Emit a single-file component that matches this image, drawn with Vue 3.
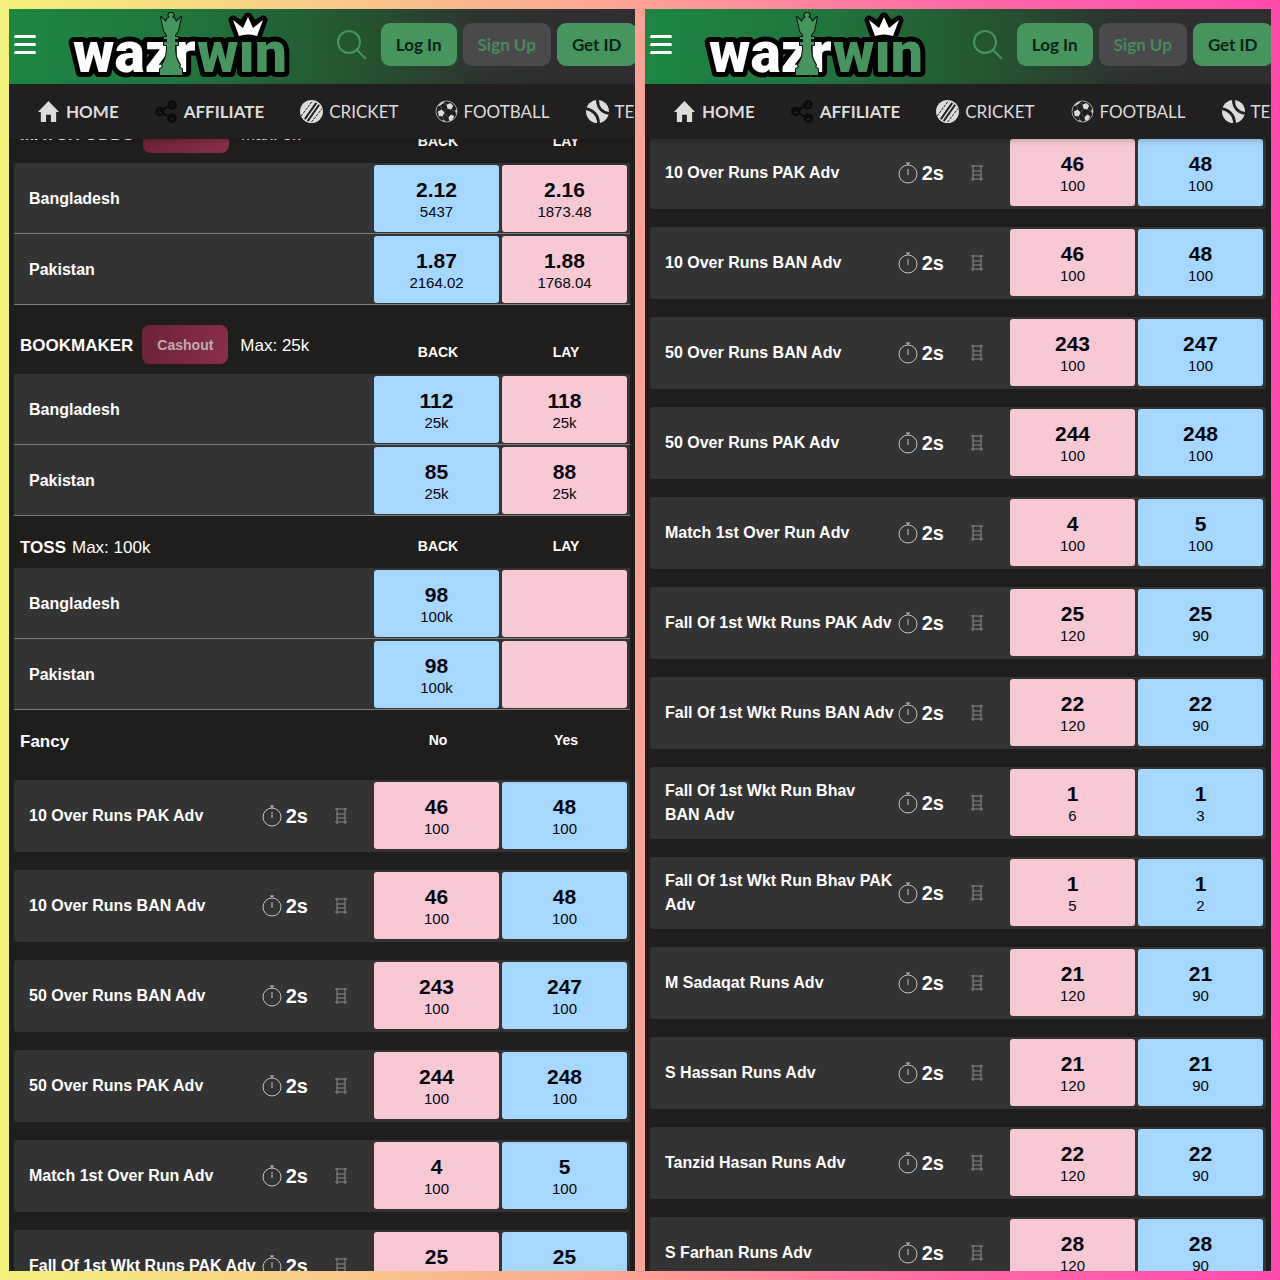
<script setup>
import { ref, onMounted } from 'vue';

const fancy = [
  { name: '10 Over Runs PAK Adv', odds: [['46', '100'], ['48', '100']] },
  { name: '10 Over Runs BAN Adv', odds: [['46', '100'], ['48', '100']] },
  { name: '50 Over Runs BAN Adv', odds: [['243', '100'], ['247', '100']] },
  { name: '50 Over Runs PAK Adv', odds: [['244', '100'], ['248', '100']] },
  { name: 'Match 1st Over Run Adv', odds: [['4', '100'], ['5', '100']] },
  { name: 'Fall Of 1st Wkt Runs PAK Adv', odds: [['25', '120'], ['25', '90']] },
  { name: 'Fall Of 1st Wkt Runs BAN Adv', odds: [['22', '120'], ['22', '90']] },
  { name: 'Fall Of 1st Wkt Run Bhav BAN\u00a0Adv', odds: [['1', '6'], ['1', '3']] },
  { name: 'Fall Of 1st Wkt Run Bhav PAK Adv', odds: [['1', '5'], ['1', '2']] },
  { name: 'M Sadaqat Runs Adv', odds: [['21', '120'], ['21', '90']] },
  { name: 'S Hassan Runs Adv', odds: [['21', '120'], ['21', '90']] },
  { name: 'Tanzid Hasan Runs Adv', odds: [['22', '120'], ['22', '90']] },
  { name: 'S Farhan Runs Adv', odds: [['28', '120'], ['28', '90']] },
];

const fancyMarket = { title: 'Fancy', type: 'fancy', labels: ['No', 'Yes'], rows: fancy };

const markets = [
  {
    title: 'MATCH ODDS', type: 'odds', cashout: true, max: 'Max: 5k', labels: ['BACK', 'LAY'],
    rows: [
      { name: 'Bangladesh', odds: [['2.12', '5437'], ['2.16', '1873.48']] },
      { name: 'Pakistan', odds: [['1.87', '2164.02'], ['1.88', '1768.04']] },
    ],
  },
  {
    title: 'BOOKMAKER', type: 'odds', cashout: true, max: 'Max: 25k', labels: ['BACK', 'LAY'],
    rows: [
      { name: 'Bangladesh', odds: [['112', '25k'], ['118', '25k']] },
      { name: 'Pakistan', odds: [['85', '25k'], ['88', '25k']] },
    ],
  },
  {
    title: 'TOSS', type: 'odds', max: 'Max: 100k', labels: ['BACK', 'LAY'],
    rows: [
      { name: 'Bangladesh', odds: [['98', '100k'], ['', '']] },
      { name: 'Pakistan', odds: [['98', '100k'], ['', '']] },
    ],
  },
  fancyMarket,
];

const screens = [
  { id: 'main', markets, scroll: 45 },
  { id: 'fancy', markets: [fancyMarket], scroll: 72 },
];

const navItems = [
  { label: 'HOME', icon: 'home', bold: true },
  { label: 'AFFILIATE', icon: 'share', bold: true },
  { label: 'CRICKET', icon: 'cricket' },
  { label: 'FOOTBALL', icon: 'football' },
  { label: 'TENNIS', icon: 'tennis' },
];

const lists = ref([]);

onMounted(() => {
  lists.value.forEach((el, i) => {
    el.scrollTop = screens[i].scroll;
  });
});
</script>

<template>
  <div class="stage">
    <section v-for="screen in screens" :key="screen.id" class="screen">
      <header class="topbar">
        <button class="menu-btn" aria-label="Menu">
          <span></span><span></span><span></span>
        </button>

        <svg class="logo" viewBox="0 0 222 68" role="img" aria-label="wazirwin">
          <g class="logo-text logo-outline">
            <text x="3" y="61">waz</text>
            <text x="104" y="61">r</text>
            <text x="127" y="61">wın</text>
          </g>
          <path class="crown-outline" d="M169 26 L163 9 L172 15 L178 6 L184 15 L193 9 L187 26 Z" />
          <g class="logo-text">
            <text class="white" x="3" y="61">waz</text>
            <text class="white" x="104" y="61">r</text>
            <text class="green" x="127" y="61">wın</text>
          </g>
          <path class="crown" d="M169 25 L163 9 L173 17 L178 6 L183 17 L193 9 L187 25 Q178 22 169 25 Z" />
          <path
            class="queen"
            d="M101 2 A2 2 0 0 1 102 6 L105 8 L106 11 L111 6 L108 20 L105 24 V26 H108 V28 H105 V31 H108 V34 H105 C105 46 107 49 110 54 L109 56 L112 58 V64 H90 V58 L93 56 L92 54 C95 49 97 46 97 34 H94 V31 H97 V28 H94 V26 H97 V24 L94 20 L91 6 L96 11 L97 8 L100 6 A2 2 0 0 1 101 2 Z"
          />
        </svg>

        <button class="search-btn" aria-label="Search">
          <svg width="32" height="32" viewBox="0 0 32 32">
            <circle cx="13" cy="13" r="11" />
            <path d="M21 21 L30 30" />
          </svg>
        </button>

        <div class="actions">
          <button class="btn">Log In</button>
          <button class="btn muted">Sign Up</button>
          <button class="btn">Get ID</button>
        </div>
      </header>

      <nav class="nav">
        <a v-for="item in navItems" :key="item.label" href="#" :class="['nav-link', { bold: item.bold }]">
          <svg v-if="item.icon === 'home'" class="icon" viewBox="0 0 24 24">
            <path d="M12 1 L23 12.500 H20 V23 H14.500 V15.500 H9.500 V23 H4 V12.500 H1 Z" />
          </svg>
          <svg v-else-if="item.icon === 'share'" class="icon share" viewBox="0 0 24 24">
            <path d="M5 12 L17 5 M5 12 L17 19" />
            <circle cx="5" cy="12" r="4" />
            <circle cx="18" cy="5" r="4" />
            <circle cx="18" cy="19" r="4" />
            <path class="person" d="M3 14 q2 -3 4 0 M16 7 q2 -3 4 0 M16 21 q2 -3 4 0" />
            <path class="person" d="M5 10 v1 M18 3 v1 M18 17 v1" />
          </svg>
          <svg v-else-if="item.icon === 'cricket'" class="icon" viewBox="0 0 24 24">
            <circle cx="12" cy="12" r="12" />
            <path class="seam bold-seam" d="M5 20 L17 3 M8 22 L20 5" />
            <path class="seam dash" d="M1 17 L13 1 M12 23 L23 9" />
          </svg>
          <svg v-else-if="item.icon === 'football'" class="icon" viewBox="0 0 24 24">
            <circle class="ring" cx="12" cy="12" r="11" />
            <path d="M12 5 L16 3 L19 6 L17 10 L13 9 Z M3 12 L7 10 L10 13 L8 17 L4 17 Z M14 18 L17 15 L20 17 L18 21 L15 22 Z M3 6 Q6 2 10 1 L9 3 L5 6 Z M22 9 L23 12 L22 14 L21 12 Z M7 21 L10 21 L11 23 Z" />
            <path class="ring faint" d="M7 10 L6 6 M12 5 L9 3 M13 9 L10 13 M8 17 L9 21 M17 10 L21 12 M10 14 L14 18" />
          </svg>
          <svg v-else class="icon" viewBox="0 0 24 24">
            <circle cx="12" cy="12" r="12" />
            <path class="seam thick" d="M0 9 C7 10 13 16 13 24 M12 0 C12 8 17 13 24 14" />
          </svg>
          <span>{{ item.label }}</span>
        </a>
      </nav>

      <main ref="lists" class="markets">
        <table v-for="market in screen.markets" :key="market.title" :class="['market', market.type]">
          <colgroup>
            <col />
            <col class="odds-col" />
            <col class="odds-col" />
          </colgroup>
          <thead>
            <tr>
              <th scope="col" class="head-title">
                <div class="head-inner">
                  <span class="title">{{ market.title }}</span>
                  <button v-if="market.cashout" class="cashout">Cashout</button>
                  <span v-if="market.max" class="max">{{ market.max }}</span>
                </div>
              </th>
              <th v-for="label in market.labels" :key="label" scope="col" class="head-label">{{ label }}</th>
            </tr>
          </thead>
          <tbody>
            <tr v-for="row in market.rows" :key="row.name">
              <th scope="row" class="name-cell">
                <div class="name-inner">
                  <span class="name">{{ row.name }}</span>
                  <template v-if="market.type === 'fancy'">
                    <svg class="timer" width="20" height="22" viewBox="0 0 20 22">
                      <circle cx="10" cy="12" r="9" />
                      <path d="M10 3 V1 M8 1 H12 M10 7 V13" />
                    </svg>
                    <span class="delay">2s</span>
                    <button class="ladder-btn" aria-label="Ladder">
                      <svg width="12" height="18" viewBox="0 0 12 18">
                        <path d="M2 1 V17 M10 1 V17 M0 2 H12 M2 7 H10 M2 11 H10 M0 15 H12" />
                      </svg>
                    </button>
                  </template>
                </div>
              </th>
              <td v-for="(odd, i) in row.odds" :key="i" class="odd-cell">
                <button
                  :class="['odd', (market.type === 'fancy') === (i === 0) ? 'pink' : 'blue']"
                  :aria-label="odd[0] ? null : market.labels[i]"
                >
                  <span class="price">{{ odd[0] }}</span>
                  <span class="size">{{ odd[1] }}</span>
                </button>
              </td>
            </tr>
          </tbody>
        </table>
      </main>
    </section>
  </div>
</template>

<style>
body {
  margin: 0;
  background: #1f1e1c;
}
</style>

<style scoped>
.stage {
  display: flex;
  gap: 10px;
  height: 100vh;
  padding: 9px;
  box-sizing: border-box;
  background: linear-gradient(90deg, #f3f37c 0%, #fca295 50%, #ff68a6 75%, #ff4bab 100%);
  font-family: 'Liberation Sans', Arial, sans-serif;
}

.screen {
  flex: 1;
  min-width: 0;
  display: flex;
  flex-direction: column;
  overflow: hidden;
  background: #1f1e1c;
}

button {
  font: inherit;
  border: 0;
  padding: 0;
  background: none;
  cursor: pointer;
}

/* Top bar */
.topbar {
  display: flex;
  flex-shrink: 0;
  height: 75px;
  padding-left: 5px;
  box-sizing: border-box;
  background: linear-gradient(90deg, #1c8743 0%, #20733c 30%, #25512f 58%, #2d3430 75%, #2f2d30 90%);
}

.menu-btn {
  display: flex;
  flex-direction: column;
  gap: 5px;
  width: 22px;
  margin: 26px 34px 0 0;
  align-self: flex-start;
}

.menu-btn span {
  height: 3px;
  border-radius: 2px;
  background: #fff;
}

.logo {
  flex-shrink: 0;
  width: 222px;
  height: 68px;
  margin-top: 2px;
  overflow: visible;
}

.logo-text {
  font-family: Roboto, sans-serif;
  font-weight: 900;
  font-size: 57px;
}

.logo-outline {
  stroke: #000;
  stroke-width: 10px;
  stroke-linejoin: round;
}

.white { fill: #fff; }
.green { fill: #46955e; }
.crown { fill: #fff; }

.crown-outline {
  stroke: #000;
  stroke-width: 9px;
  stroke-linejoin: round;
}

.queen {
  fill: #46955e;
  stroke: #07120b;
  stroke-width: 2px;
  stroke-linejoin: round;
  paint-order: stroke;
}

.search-btn {
  align-self: flex-start;
  height: 32px;
  margin: 20px 13px 0 44px;
}

.search-btn svg {
  display: block;
  fill: none;
  stroke: #46955e;
  stroke-width: 2px;
}

.actions {
  display: flex;
  gap: 6px;
  padding-top: 14px;
}

.btn {
  flex-shrink: 0;
  height: 43px;
  padding: 0 15px;
  border-radius: 9px;
  background: #46955e;
  color: #0b2412;
  font-family: Lato, sans-serif;
  font-size: 17px;
  font-weight: 700;
}

.btn.muted {
  background: #4a494c;
  color: #46895c;
}

/* Navigation */
.nav {
  position: relative;
  z-index: 1;
  display: flex;
  flex-shrink: 0;
  align-items: center;
  gap: 36px;
  height: 55px;
  padding-left: 28px;
  background: #211f1f;
  box-shadow: 0 2px 6px rgba(0, 0, 0, 0.2);
}

.nav-link {
  display: flex;
  flex-shrink: 0;
  align-items: center;
  gap: 6px;
  color: #dcdcdc;
  font-family: Lato, sans-serif;
  font-size: 17px;
  text-decoration: none;
}

.nav-link.bold { font-weight: 700; }

.icon {
  width: 23px;
  height: 23px;
  fill: #dcdcdc;
}

.seam {
  fill: none;
  stroke: #211f1f;
  stroke-width: 1px;
}

.seam.dash { stroke-dasharray: 3 1; }
.seam.bold-seam { stroke-width: 2px; }
.seam.thick { stroke-width: 3px; }

.ring {
  fill: none;
  stroke: #a8a8a8;
  stroke-width: 1px;
}

.ring.faint { stroke: #555; }

.share {
  fill: #0c0b0b;
  stroke: #0c0b0b;
  stroke-width: 2px;
}

.share .person {
  fill: none;
  stroke: #2b2929;
  stroke-width: 1px;
}

/* Markets */
.markets {
  flex: 1;
  min-height: 0;
  padding: 0 5px;
  overflow-y: auto;
  scrollbar-width: none;
}

.market {
  width: 100%;
  table-layout: fixed;
  border-collapse: separate;
  border-spacing: 0;
  color: #fff;
}

.market.fancy { border-spacing: 0 18px; }

.odds-col { width: 128px; }

.head-title {
  padding: 18px 0 10px 6px;
  font-size: 17px;
  text-align: left;
}

.head-inner {
  display: flex;
  align-items: center;
  gap: 6px;
  line-height: 20px;
}

.title,
.max { padding-top: 4px; }

.max { font-weight: 400; }

.cashout {
  height: 39px;
  margin: 2px 6px 0 3px;
  padding: 0 15px;
  border-radius: 8px;
  background: linear-gradient(100deg, #6d2236, #8a2f49);
  color: #bfaab0;
  font-size: 14px;
  font-weight: 700;
}

.head-label {
  padding: 0 0 12px;
  font-size: 14px;
  line-height: 20px;
  vertical-align: bottom;
}

.fancy .head-title {
  height: 24px;
  padding-top: 0;
}

.name-cell {
  padding: 0 0 0 15px;
  background: #333;
  border-radius: 3px 0 0 3px;
  font-size: 16px;
  text-align: left;
}

.odds .name-cell { padding-top: 2px; }

.name-inner {
  display: flex;
  align-items: center;
  line-height: 24px;
}

.name { flex: 1; }

.timer {
  flex-shrink: 0;
  margin: 0 4px 0 2px;
  fill: none;
  stroke: #c4c4c4;
  stroke-width: 1px;
}

.delay { font-size: 20px; }

.ladder-btn {
  height: 18px;
  margin: 0 27px;
}

.ladder-btn svg {
  display: block;
  fill: none;
  stroke: #8c8c8c;
  stroke-width: 1px;
}

.odd-cell {
  padding: 2px 3px 1px 0;
  background: #333;
}

.odd-cell:last-child { border-radius: 0 3px 3px 0; }

.odds .name-cell,
.odds .odd-cell { border-bottom: 1px solid #7c7c7c; border-radius: 0; }

.fancy .odd-cell { padding-bottom: 3px; }

.odd {
  display: flex;
  flex-direction: column;
  align-items: center;
  justify-content: center;
  width: 100%;
  height: 67px;
  padding-top: 2px;
  border-radius: 3px;
  color: #05050c;
}

.blue { background: #a6d8ff; }
.pink { background: #f8c9d4; }

.price {
  font-size: 21px;
  font-weight: 700;
  line-height: 24px;
}

.size {
  font-size: 15px;
  line-height: 20px;
}
</style>
